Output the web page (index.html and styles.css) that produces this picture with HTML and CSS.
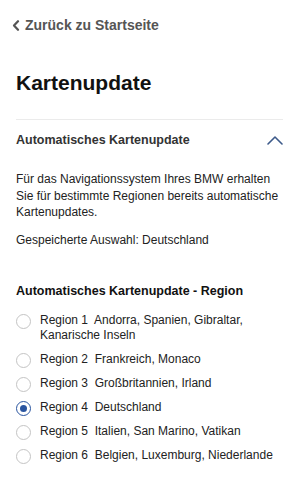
FILE: index.html
```html
<!DOCTYPE html>
<html lang="de">
<head>
<meta charset="utf-8">
<title>Kartenupdate</title>
<link rel="stylesheet" href="styles.css">
</head>
<body>
<div class="page">
  <a class="back" href="#">
    <svg class="back-icon" width="8" height="11" viewBox="0 0 8 11"><path d="M6 1.2 L2 5.5 L6 9.8" fill="none" stroke="#555" stroke-width="2.2" stroke-linecap="round" stroke-linejoin="round"/></svg>
    <span>Zurück zu Startseite</span>
  </a>
  <h1 class="title">Kartenupdate</h1>
  <div class="divider"></div>
  <div class="acc-head">
    <span>Automatisches Kartenupdate</span>
    <svg class="acc-icon" width="16" height="9" viewBox="0 0 16 9"><path d="M1 8 L8 1 L15 8" fill="none" stroke="#3d5a8a" stroke-width="1.6" stroke-linecap="round" stroke-linejoin="round"/></svg>
  </div>
  <p class="para">Für das Navigationssystem Ihres BMW erhalten Sie für bestimmte Regionen bereits automatische Kartenupdates.</p>
  <p class="saved">Gespeicherte Auswahl: Deutschland</p>
  <h2 class="sub">Automatisches Kartenupdate - Region</h2>
  <ul class="radios">
    <li class="radio"><span class="dot"></span><span class="label">Region 1&nbsp; Andorra, Spanien, Gibraltar, Kanarische Inseln</span></li>
    <li class="radio"><span class="dot"></span><span class="label">Region 2&nbsp; Frankreich, Monaco</span></li>
    <li class="radio"><span class="dot"></span><span class="label">Region 3&nbsp; Großbritannien, Irland</span></li>
    <li class="radio"><span class="dot on"></span><span class="label">Region 4&nbsp; Deutschland</span></li>
    <li class="radio"><span class="dot"></span><span class="label">Region 5&nbsp; Italien, San Marino, Vatikan</span></li>
    <li class="radio"><span class="dot"></span><span class="label">Region 6&nbsp; Belgien, Luxemburg, Niederlande</span></li>
  </ul>
</div>
</body>
</html>
```
FILE: styles.css
```css
html, body {
  margin: 0;
  padding: 0;
  background: #fff;
}
body {
  font-family: "Liberation Sans", Arial, Helvetica, sans-serif;
  color: #222;
}
.page {
  padding: 15px 16px 0 16px;
}
.back {
  display: flex;
  align-items: center;
  gap: 5px;
  margin-left: -4px;
  font-size: 14px;
  line-height: 20px;
  font-weight: bold;
  color: #555;
  text-decoration: none;
}
.back-icon {
  display: block;
}
.title {
  margin: 35px 0 0 0;
  font-size: 21px;
  line-height: 26px;
  font-weight: bold;
  color: #111;
}
.divider {
  height: 1px;
  background: #ebebeb;
  margin-top: 23px;
}
.acc-head {
  display: flex;
  justify-content: space-between;
  align-items: center;
  padding-top: 12px;
  font-size: 12.5px;
  line-height: 16px;
  font-weight: bold;
  color: #333;
}
.acc-icon {
  display: block;
}
.para {
  margin: 23px 0 0 0;
  font-size: 12px;
  line-height: 16.5px;
  color: #222;
}
.saved {
  margin: 11.5px 0 0 0;
  font-size: 12px;
  line-height: 16.5px;
  color: #222;
}
.sub {
  margin: 34px 0 0 0;
  font-size: 12.5px;
  line-height: 16px;
  font-weight: bold;
  color: #111;
}
.radios {
  list-style: none;
  margin: 14px 0 0 0;
  padding: 0;
  display: flex;
  flex-direction: column;
  gap: 8.2px;
}
.radio {
  display: flex;
  align-items: flex-start;
  gap: 9px;
  font-size: 12px;
  line-height: 15.5px;
  color: #222;
}
.dot {
  flex: none;
  width: 15px;
  height: 15px;
  box-sizing: border-box;
  border: 1.5px solid #c4c4c4;
  border-radius: 50%;
  margin-top: 1px;
  position: relative;
}
.dot.on {
  border-color: #2a55a0;
}
.dot.on::after {
  content: "";
  position: absolute;
  left: 2.5px;
  top: 2.5px;
  width: 7px;
  height: 7px;
  border-radius: 50%;
  background: #2a55a0;
}
```
